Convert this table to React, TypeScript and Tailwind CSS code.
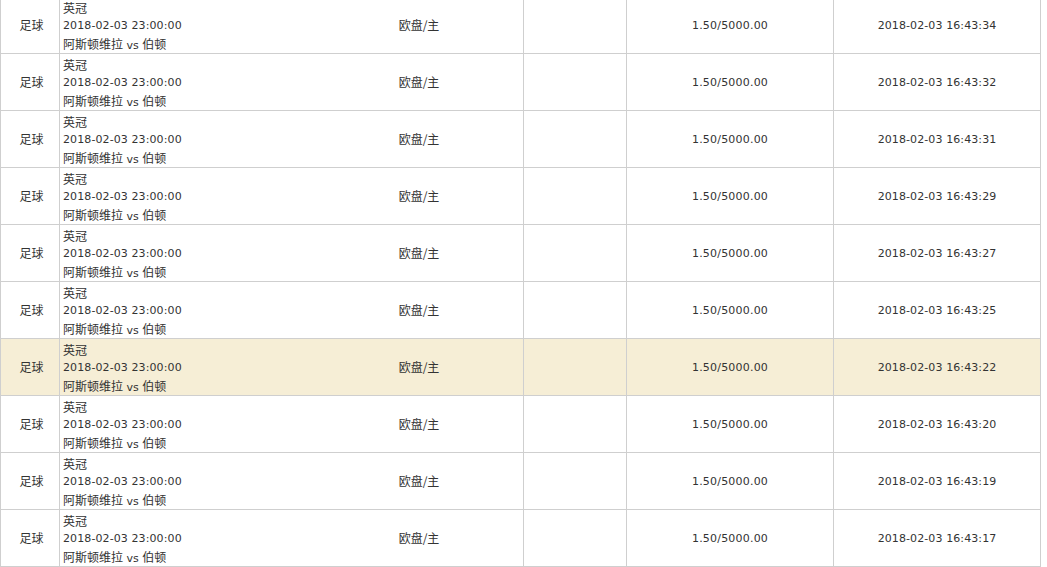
const times = ['34', '32', '31', '29', '27', '25', '22', '20', '19', '17']

const zh = 'text-[12px] leading-[18px] [font-family:"Noto_Sans_CJK_SC",sans-serif]'

function Row({ time, hilite }: { time: string; hilite: boolean }) {
  return (
    <div
      className={`flex h-[57px] border-b border-[#cfcfcf] ${hilite ? 'bg-[#f6eed6]' : 'bg-white'}`}
    >
      <div className="flex w-[59px] shrink-0 items-center justify-center border-r border-[#cfcfcf] pl-[3px]">
        <span className={zh}>足球</span>
      </div>
      <div className="flex w-[255px] shrink-0 flex-col pl-[3px] pt-[2px] leading-[18px]">
        <div className="h-[18px]">
          <span className={zh}>英冠</span>
        </div>
        <div className="h-[18px] tracking-[0.1px]">2018-02-03 23:00:00</div>
        <div className="h-[18px]">
          <span className={zh}>阿斯顿维拉</span> vs <span className={zh}>伯顿</span>
        </div>
      </div>
      <div className="flex w-[209px] shrink-0 items-center justify-center border-r border-[#cfcfcf]">
        <span className={zh}>欧盘/主</span>
      </div>
      <div className="w-[103px] shrink-0 border-r border-[#cfcfcf]" />
      <div className="flex w-[207px] shrink-0 items-center justify-center border-r border-[#cfcfcf] pt-[3px] tracking-[0.2px]">
        1.50/5000.00
      </div>
      <div className="flex w-[207px] shrink-0 items-center justify-center border-r border-[#cfcfcf] pt-[3px] tracking-[0.1px]">
        2018-02-03 16:43:{time}
      </div>
    </div>
  )
}

export default function App() {
  return (
    <div className="h-[567px] w-[1047px] overflow-hidden bg-white text-[11px] text-[#333] [font-family:'DejaVu_Sans',sans-serif]">
      <div className="-mt-[3px] w-[1041px] border-l border-[#cfcfcf]">
        {times.map((t, i) => (
          <Row key={t} time={t} hilite={i === 6} />
        ))}
      </div>
    </div>
  )
}
